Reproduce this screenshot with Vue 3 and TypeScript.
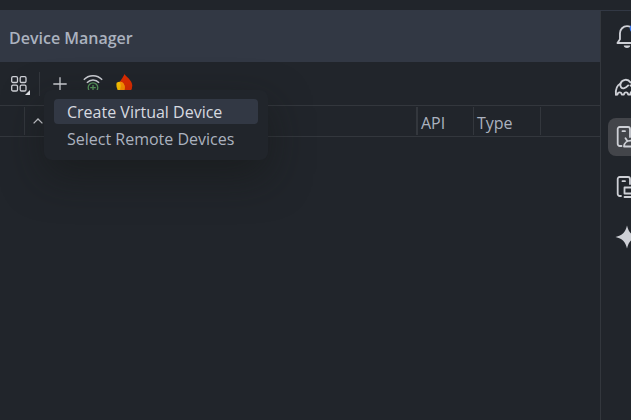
<script setup lang="ts">
import { ref } from 'vue'

interface Action {
  id: string
  label: string
}

const actions: Action[] = [
  { id: 'virtual', label: 'Create Virtual Device' },
  { id: 'remote', label: 'Select Remote Devices' },
]
const highlighted = ref<string>('virtual')
</script>

<template>
  <div class="window">
    <div class="strip"></div>
    <div class="body">
      <main class="panel">
        <header class="title"><h1>Device Manager</h1></header>
        <div class="toolbar">
          <button class="tool group" type="button" aria-label="Group by">
            <svg width="20" height="22" viewBox="0 0 20 22" fill="none">
              <g stroke="#ced0d6" stroke-width="1.3">
                <rect x="1.7" y="2.7" width="5.8" height="5.8" rx="1.3" />
                <rect x="10.2" y="2.7" width="5.8" height="5.8" rx="1.3" />
                <rect x="1.7" y="11.2" width="5.8" height="5.8" rx="1.3" />
                <rect x="10.2" y="11.2" width="5.8" height="5.8" rx="1.3" />
              </g>
              <path d="M20 16v5h-5z" fill="#dfe1e5" />
            </svg>
          </button>
          <span class="divider"></span>
          <div class="add">
            <button class="tool" type="button" aria-label="Add device" aria-haspopup="menu">
              <svg width="20" height="20" viewBox="0 0 20 20" fill="none">
                <path d="M10 3.3v13.4M3.3 10h13.4" stroke="#ced0d6" stroke-width="1.3" />
              </svg>
            </button>
            <div class="menu" role="menu">
              <button
                v-for="action in actions"
                :key="action.id"
                type="button"
                role="menuitem"
                class="item"
                :class="{ active: highlighted === action.id }"
                @mouseenter="highlighted = action.id"
              >{{ action.label }}</button>
            </div>
          </div>
          <button class="tool wifi" type="button" aria-label="Pair devices using Wi-Fi">
            <svg width="20" height="20" viewBox="0 0 20 20" fill="none">
              <g stroke="#ced0d6" stroke-width="1.4">
                <path d="M.8 5.8C5.7.4 14.3.4 19.2 5.8" />
                <path d="M3.9 8.7c3.4-3.7 8.800-3.700 12.200 0" />
              </g>
              <circle cx="10" cy="13.700" r="4.800" fill="#21252b" stroke="#57965c" stroke-width="1.3" />
              <path d="M10 10.900v5.600M7.200 13.700h5.600" stroke="#57965c" stroke-width="1.3" />
            </svg>
          </button>
          <button class="tool" type="button" aria-label="Firebase">
            <svg width="20" height="20" viewBox="0 0 20 20" fill="none">
              <path d="M9.500 0c1 2.200 7.800 6.200 7.800 11.600A8 8 0 0 1 9.500 20C5 20 2.500 17 2.500 14 2.500 9 7.800 5 9.500 0z" fill="#dd2c00" />
              <path d="M1.600 8.700c4-2.200 8-.2 8 4.800 0 2.500-1 4.500-2.100 6.100C3.300 18.600.6 13.600 1.600 8.700z" fill="#ffc400" />
              <path d="M4.600 7.900c3.400-.1 5.200 2.600 5 5.600 0 2.500-1 4.500-2.100 6.100-2-.8-3-3-2-5.600.5-1.700.4-4-.9-6.100z" fill="#ff9100" />
            </svg>
          </button>
        </div>
        <table class="devices">
          <colgroup>
            <col class="c-icon" /><col /><col class="c-api" /><col class="c-type" /><col class="c-last" />
          </colgroup>
          <thead>
            <tr>
              <th><i></i></th>
              <th class="name" aria-label="Name" aria-sort="ascending">
                <svg width="10" height="6" viewBox="0 0 10 6" fill="none">
                  <path d="M.6 5.400 5 1l4.400 4.400" stroke="#ced0d6" stroke-width="1.3" />
                </svg>
                <i class="wide"></i>
              </th>
              <th>API<i></i></th>
              <th>Type<i></i></th>
              <th></th>
            </tr>
          </thead>
        </table>
      </main>
      <nav class="rail" aria-label="Tool windows">
        <button type="button" aria-label="Notifications">
          <svg width="26" height="26" viewBox="0 0 24 24" fill="none">
            <path d="M3.200 17.500 5.500 14V8.500a6.500 6.500 0 0 1 13 0V14l2.300 3.500z" stroke="#ced0d6" stroke-width="1.700" stroke-linejoin="round" />
            <path d="M9 19.800h6c0 1.300-1.300 2.300-3 2.300s-3-1-3-2.300z" fill="#ced0d6" />
            <circle cx="19" cy="4" r="4.500" fill="#3574f0" />
          </svg>
        </button>
        <button type="button" aria-label="Gradle">
          <svg width="26" height="26" viewBox="0 0 24 24" fill="none" stroke="#ced0d6" stroke-width="1.700" stroke-linecap="round" stroke-linejoin="round">
            <path d="M1.800 19C1.300 14 2.800 10.500 6 8.800c-.6 3 1 5 3.500 4.300 1.800-.5 2.600-1.500 3.600-2.600" />
            <path d="M6 8.600C7.500 4.800 12.800 4.200 15 7.500c2 1.800 5.500 1.500 5-1" />
            <path d="M1.800 19h1.400c.4-2.800 3.600-2.800 4 0h1.900c.4-2.800 3.600-2.800 4 0H15c.3-5 8-5 7-13.500" />
            <path d="M15.200 10.500l1 .8" />
          </svg>
        </button>
        <button type="button" class="selected" aria-label="Device Manager">
          <svg width="24" height="24" viewBox="0 0 24 24" fill="none" stroke="#ced0d6" stroke-width="1.800" stroke-linecap="round" stroke-linejoin="round">
            <path d="M6.500 21H4.700a2 2 0 0 1-2-2V4a2 2 0 0 1 2-2H13a2 2 0 0 1 2 2v8M7.500 6.200H10" />
            <path d="M9 21.500c.3-7.800 13-7.800 13.300 0zM12 15.500 10.500 13.300M19.500 15.500l1.500-2.200" />
          </svg>
        </button>
        <button type="button" aria-label="Running Devices">
          <svg width="24" height="24" viewBox="0 0 24 24" fill="none" stroke="#ced0d6" stroke-width="1.800" stroke-linecap="round" stroke-linejoin="round">
            <path d="M6 21H4.700a2 2 0 0 1-2-2V4a2 2 0 0 1 2-2H13a2 2 0 0 1 2 2v5M7.500 6.200H10" />
            <path d="M9.500 12.500h13v6h-13zM9.500 22h13" />
          </svg>
        </button>
        <button type="button" aria-label="Gemini">
          <svg width="24" height="24" viewBox="0 0 24 24">
            <path d="M12 .5c1.700 7 4.500 9.800 11.500 11.500-7 1.700-9.800 4.500-11.500 11.500C10.300 16.500 7.500 13.700.5 12 7.500 10.300 10.300 7.500 12 .5z" fill="#ced0d6" />
          </svg>
        </button>
      </nav>
    </div>
  </div>
</template>

<style>
body {
  margin: 0;
  background: #21252b;
}
</style>

<style scoped>
.window {
  display: flex;
  flex-direction: column;
  min-height: 100vh;
  overflow: hidden;
  background: #21252b;
  color: #abb2bf;
  font: 16px/24px "Open Sans", "Noto Sans", sans-serif;
}
.strip {
  height: 10px;
  border-bottom: 1px solid #323844;
}
.body {
  display: flex;
  flex: 1;
}
.panel {
  flex: 1;
  min-width: 0;
}
.title {
  display: flex;
  align-items: center;
  box-sizing: border-box;
  height: 51px;
  padding: 2px 9px 0;
  background: #323844;
}
h1 {
  margin: 0;
  font-size: 16px;
  line-height: 24px;
  font-weight: 600;
}
button {
  display: flex;
  align-items: center;
  justify-content: center;
  margin: 0;
  padding: 0;
  border: 0;
  background: none;
  color: inherit;
  font: inherit;
}
svg {
  display: block;
  flex: none;
}
.toolbar {
  display: flex;
  align-items: center;
  height: 43px;
  padding-left: 10px;
  border-bottom: 1px solid #33373d;
}
.group {
  padding-top: 2px;
}
.divider {
  width: 1px;
  height: 24px;
  margin: 0 10px 0 9px;
  background: #33373d;
}
.add {
  position: relative;
}
.wifi {
  margin: 0 12px 0 13px;
}
.menu {
  position: absolute;
  top: 16px;
  left: -6px;
  z-index: 2;
  display: flex;
  flex-direction: column;
  gap: 2px;
  box-sizing: border-box;
  width: 224px;
  padding: 9px 10px;
  border-radius: 8px;
  background: #21252b;
  box-shadow: 0 16px 40px rgba(20, 22, 20, 0.5);
}
.item {
  justify-content: flex-start;
  box-sizing: border-box;
  width: 100%;
  height: 25px;
  padding: 2px 13px 0;
  border-radius: 4px;
  white-space: nowrap;
}
.item.active {
  background: #323844;
  color: #d7dae0;
}
.devices {
  width: 100%;
  table-layout: fixed;
  border-collapse: collapse;
  border-bottom: 1px solid #33373d;
}
.c-icon {
  width: 25px;
}
.c-api {
  width: 56px;
}
.c-type {
  width: 67px;
}
.c-last {
  width: 59px;
}
th {
  position: relative;
  height: 27px;
  padding: 3px 3px 0;
  font-weight: 400;
  text-align: left;
}
th.name {
  padding: 0 3px 0 8px;
}
th i {
  position: absolute;
  top: 1px;
  right: 0;
  bottom: 1px;
  width: 1px;
  background: #33373d;
}
th i.wide {
  width: 2px;
}
.rail {
  display: flex;
  flex: none;
  flex-direction: column;
  gap: 12px;
  box-sizing: border-box;
  width: 31px;
  padding: 7px 0 0 7px;
  border-left: 1px solid #33373d;
}
.rail button {
  width: 38px;
  height: 38px;
  border-radius: 8px;
}
.rail .selected {
  background: #43454a;
}
</style>
